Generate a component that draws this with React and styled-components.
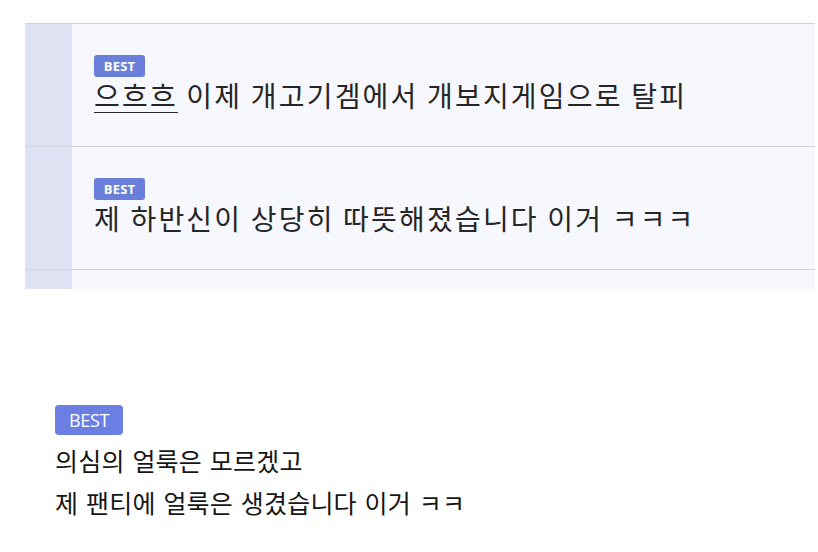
import React from "react";
import styled, { createGlobalStyle } from "styled-components";

const Global = createGlobalStyle`
  html, body { margin: 0; padding: 0; background: #ffffff; }
  body { font-family: "Noto Sans CJK KR", "Noto Sans", sans-serif; color: #222; }
`;

const Page = styled.div`
  width: 818px;
  height: 552px;
  overflow: hidden;
  padding-top: 23px;
  box-sizing: border-box;
`;

const Panel = styled.div`
  margin-left: 25px;
  width: 790px;
  display: flex;
  flex-direction: column;
`;

const Row = styled.div`
  display: grid;
  grid-template-columns: 47px 1fr;
  height: ${(p) => p.$h}px;
  border-top: 1px solid #cfd3dc;
  box-sizing: border-box;
  overflow: hidden;
`;

const Side = styled.div`
  background: #dfe3f3;
`;

const Content = styled.div`
  background: #f6f8fd;
  padding: ${(p) => (p.$empty ? "0" : "31px 0 0 22px")};
  display: flex;
  flex-direction: column;
  align-items: flex-start;
`;

const SmallBadge = styled.span`
  display: inline-flex;
  align-items: center;
  justify-content: center;
  width: 51px;
  height: 22px;
  border-radius: 3px;
  background: #6a7fd9;
  color: #fff;
  font-family: "Open Sans", "Noto Sans", sans-serif;
  font-weight: 700;
  font-size: 13px;
  letter-spacing: 0.2px;
`;

const Title = styled.div`
  margin-top: 1px;
  font-size: 28px;
  line-height: 34px;
  letter-spacing: 2.2px;
  color: #262626;
`;

const U = styled.span`
  text-decoration: underline;
  text-underline-offset: 5px;
  text-decoration-thickness: 1px;
`;

const Comment = styled.div`
  margin: 116px 0 0 55px;
  display: flex;
  flex-direction: column;
  align-items: flex-start;
`;

const BigBadge = styled.span`
  display: inline-flex;
  align-items: center;
  justify-content: center;
  width: 68px;
  height: 30px;
  border-radius: 4px;
  background: #6b7fe3;
  color: #fff;
  font-family: "Open Sans", "Noto Sans", sans-serif;
  font-size: 18px;
  letter-spacing: -0.3px;
`;

const Line = styled.div`
  font-size: 25px;
  line-height: 42px;
  letter-spacing: 0.2px;
  word-spacing: 2px;
  color: #161616;
  margin-top: ${(p) => p.$mt || 0}px;
`;

export default function App() {
  return (
    <>
      <Global />
      <Page>
        <Panel>
          <Row $h={123}>
            <Side />
            <Content>
              <SmallBadge>BEST</SmallBadge>
              <Title>
                <U>으흐흐</U> 이제 개고기겜에서 개보지게임으로 탈피
              </Title>
            </Content>
          </Row>
          <Row $h={123}>
            <Side />
            <Content>
              <SmallBadge>BEST</SmallBadge>
              <Title>제 하반신이 상당히 따뜻해졌습니다 이거 ㅋㅋㅋ</Title>
            </Content>
          </Row>
          <Row $h={20}>
            <Side />
            <Content $empty />
          </Row>
        </Panel>
        <Comment>
          <BigBadge>BEST</BigBadge>
          <Line $mt={4}>의심의 얼룩은 모르겠고</Line>
          <Line>제 팬티에 얼룩은 생겼습니다 이거 ㅋㅋ</Line>
        </Comment>
      </Page>
    </>
  );
}
